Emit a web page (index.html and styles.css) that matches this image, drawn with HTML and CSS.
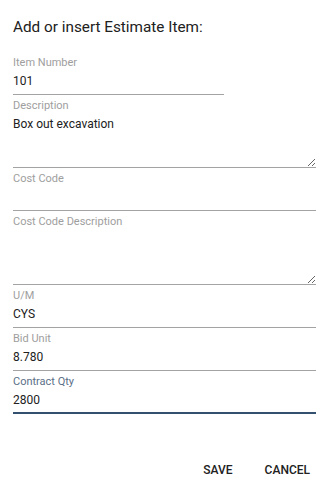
FILE: index.html
```
<!DOCTYPE html>
<html lang="en">
<head>
  <meta charset="UTF-8" />
  <title>Estimate Item</title>
  <link rel="stylesheet" href="styles.css">
</head>
<body>

<div class="dialog">
    <h2 class="dialog-title">Add or insert Estimate Item:</h2>

    <div class="field short">
        <label>Item Number</label>
        <input type="text" value="101" />
    </div>
    <div class="field">
        <label>Description</label>
        <textarea>Box out excavation</textarea>
    </div>
    <div class="field">
        <label>Cost Code</label>
        <input type="text" value="" />
    </div>
    <div class="field">
        <label>Cost Code Description</label>
        <textarea class="tall"></textarea>
    </div>
    <div class="field">
        <label>U/M</label>
        <input type="text" value="CYS" />
    </div>
    <div class="field">
        <label>Bid Unit</label>
        <input type="text" value="8.780" />
    </div>
    <div class="field focused">
        <label>Contract Qty</label>
        <input type="text" value="2800" />
    </div>

    <div class="dialog-actions">
        <button>Save</button>
        <button>Cancel</button>
    </div>
</div>

</body>
</html>
```

FILE: styles.css
```
body {
    margin: 0;
    background: #fff;
    font-family: Roboto, "Liberation Sans", sans-serif;
    color: #212121;
}

.dialog {
    padding: 17px 15px 0 13px;
}

.dialog-title {
    margin: 0 0 15px;
    font-size: 15.3px;
    font-weight: 400;
    line-height: 20px;
    color: #212121;
}

/* 輸入欄位 */
.field {
    display: flex;
    flex-direction: column;
    padding-top: 4px;
}
.field.short {
    width: 211px;
}
.field label {
    font-size: 11px;
    line-height: 14px;
    height: 14px;
    margin-bottom: 2px;
    color: #9e9e9e;
}
.field input,
.field textarea {
    font-family: inherit;
    font-size: 12px;
    line-height: 14px;
    color: #212121;
    padding: 2px 0 6px;
    margin: 0;
    border: none;
    border-bottom: 1px solid #a3a3a3;
    outline: none;
    background: transparent;
}
.field textarea {
    height: 53px;
    box-sizing: border-box;
    padding-bottom: 0;
    resize: vertical;
}
.field textarea.tall {
    height: 54px;
}
.field.focused label {
    color: #5b6f87;
}
.field.focused input {
    border-bottom: 2px solid #34506f;
    padding-bottom: 5px;
}

/* 按鈕 */
.dialog-actions {
    display: flex;
    justify-content: flex-end;
    margin-top: 43px;
    margin-right: -10px;
}
.dialog-actions button {
    background: none;
    border: none;
    padding: 6px 16px;
    font-family: inherit;
    font-size: 12px;
    font-weight: 500;
    line-height: 14px;
    text-transform: uppercase;
    color: #212121;
    cursor: pointer;
}
```
